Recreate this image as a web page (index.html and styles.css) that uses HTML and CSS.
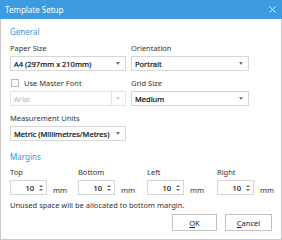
FILE: index.html
```html
<!DOCTYPE html>
<html>
<head>
<meta charset="utf-8">
<link rel="stylesheet" href="styles.css">
</head>
<body>
<div class="win">
  <div class="titlebar">
    <span class="title">Template Setup</span>
    <svg class="close" width="7" height="7" viewBox="0 0 7 7"><path d="M0.5 0.5L6.5 6.5M6.5 0.5L0.5 6.5" stroke="#eaf4fc" stroke-width="1"/></svg>
  </div>
  <div class="body">
    <div class="section">General</div>
    <div class="grid2">
      <div class="field">
        <div class="label">Paper Size</div>
        <div class="select"><span class="val">A4 (297mm x 210mm)</span><span class="caret"></span></div>
      </div>
      <div class="field">
        <div class="label">Orientation</div>
        <div class="select"><span class="val">Portrait</span><span class="caret"></span></div>
      </div>
      <div class="field">
        <div class="label check"><span class="box"></span>Use Master Font</div>
        <div class="select disabled"><span class="val">Arial</span><span class="sep"></span><span class="caret"></span></div>
      </div>
      <div class="field">
        <div class="label">Grid Size</div>
        <div class="select"><span class="val">Medium</span><span class="caret"></span></div>
      </div>
      <div class="field wide">
        <div class="label">Measurement Units</div>
        <div class="select"><span class="val">Metric (Millimetres/Metres)</span><span class="caret"></span></div>
      </div>
    </div>
    <div class="section margins-title">Margins</div>
    <div class="margins">
      <div class="mfield">
        <div class="label">Top</div>
        <div class="spinrow"><div class="spin"><span class="num">10</span><span class="arrows"><span class="up"></span><span class="dn"></span></span></div><span class="unit">mm</span></div>
      </div>
      <div class="mfield">
        <div class="label">Bottom</div>
        <div class="spinrow"><div class="spin"><span class="num">10</span><span class="arrows"><span class="up"></span><span class="dn"></span></span></div><span class="unit">mm</span></div>
      </div>
      <div class="mfield">
        <div class="label">Left</div>
        <div class="spinrow"><div class="spin"><span class="num">10</span><span class="arrows"><span class="up"></span><span class="dn"></span></span></div><span class="unit">mm</span></div>
      </div>
      <div class="mfield">
        <div class="label">Right</div>
        <div class="spinrow"><div class="spin"><span class="num">10</span><span class="arrows"><span class="up"></span><span class="dn"></span></span></div><span class="unit">mm</span></div>
      </div>
    </div>
    <div class="note">Unused space will be allocated to bottom margin.</div>
    <div class="buttons">
      <div class="btn ok"><u>O</u>K</div>
      <div class="btn cancel"><u>C</u>ancel</div>
    </div>
  </div>
</div>
</body>
</html>
```

FILE: styles.css
```css
* { box-sizing: border-box; }
html, body { margin: 0; padding: 0; background: #fff; }
body { font-family: "Noto Sans", "Open Sans", sans-serif; font-size: 7.5px; color: #333; }
.win {
  width: 282px; height: 240px;
  border: 1px solid #c8c8c8; border-top: none;
  background: #fff;
  display: flex; flex-direction: column;
}
.titlebar {
  height: 19px; background: #3d9be2; margin: 0 -1px;
  display: flex; align-items: center; justify-content: space-between;
  padding: 0 6px 0 5px; color: #fff;
}
.title { font-size: 8px; }
.close { display: block; }
.body { padding: 0 9px 0 9px; display: flex; flex-direction: column; flex: 1; }
.section { color: #3a96e0; font-size: 8px; margin-top: 7px; line-height: 11px; }
.grid2 { display: grid; grid-template-columns: 116px 118px; column-gap: 5px; margin-top: 6px; }
.field { display: flex; flex-direction: column; margin-bottom: 7px; }
.label { line-height: 10px; height: 10px; margin-bottom: 3px; display: flex; align-items: center; color: #333; }
.check .box { width: 8px; height: 8px; border: 1px solid #b8b8b8; margin-right: 5px; background: #fff; }
.check { margin-left: 1px; }
.select {
  height: 15px; border: 1px solid #d6d6d6; background: #fff;
  display: flex; align-items: center; padding: 0 5px 0 3px;
  color: #000; -webkit-text-stroke: 0.15px #000;
}
.select .val { flex: 1; white-space: nowrap; }
.caret { width: 0; height: 0; border-left: 2.5px solid transparent; border-right: 2.5px solid transparent; border-top: 3px solid #777; }
.disabled { color: #b0b0b0; border-color: #e2e2e2; -webkit-text-stroke: 0; }
.disabled .sep { width: 1px; align-self: stretch; background: #e2e2e2; margin-right: 4px; }
.disabled .caret { border-top-color: #ccc; }
.margins-title { margin-top: 3px; }
.margins { display: grid; grid-template-columns: 68px 69px 70px 60px; margin-top: 5px; }
.mfield { display: flex; flex-direction: column; }
.spinrow { display: flex; align-items: center; }
.spin {
  width: 37px; height: 15px; border: 1px solid #d6d6d6;
  display: flex; align-items: center; justify-content: flex-end; padding-right: 3px;
}
.num { color: #000; -webkit-text-stroke: 0.15px #000; margin-right: 5px; }
.arrows { display: flex; flex-direction: column; gap: 2px; }
.up { width: 0; height: 0; border-left: 2px solid transparent; border-right: 2px solid transparent; border-bottom: 2px solid #666; }
.dn { width: 0; height: 0; border-left: 2px solid transparent; border-right: 2px solid transparent; border-top: 2px solid #666; }
.unit { margin-left: 6px; margin-top: 4px; }
.note { margin-top: 5px; line-height: 10px; }
.buttons { display: flex; justify-content: flex-end; gap: 8px; margin-top: 4px; }
.btn { height: 17px; border: 1px solid #c2c2c2; background: #fff; display: flex; align-items: center; justify-content: center; color: #222; }
.ok { width: 45px; }
.cancel { width: 47px; }
```
